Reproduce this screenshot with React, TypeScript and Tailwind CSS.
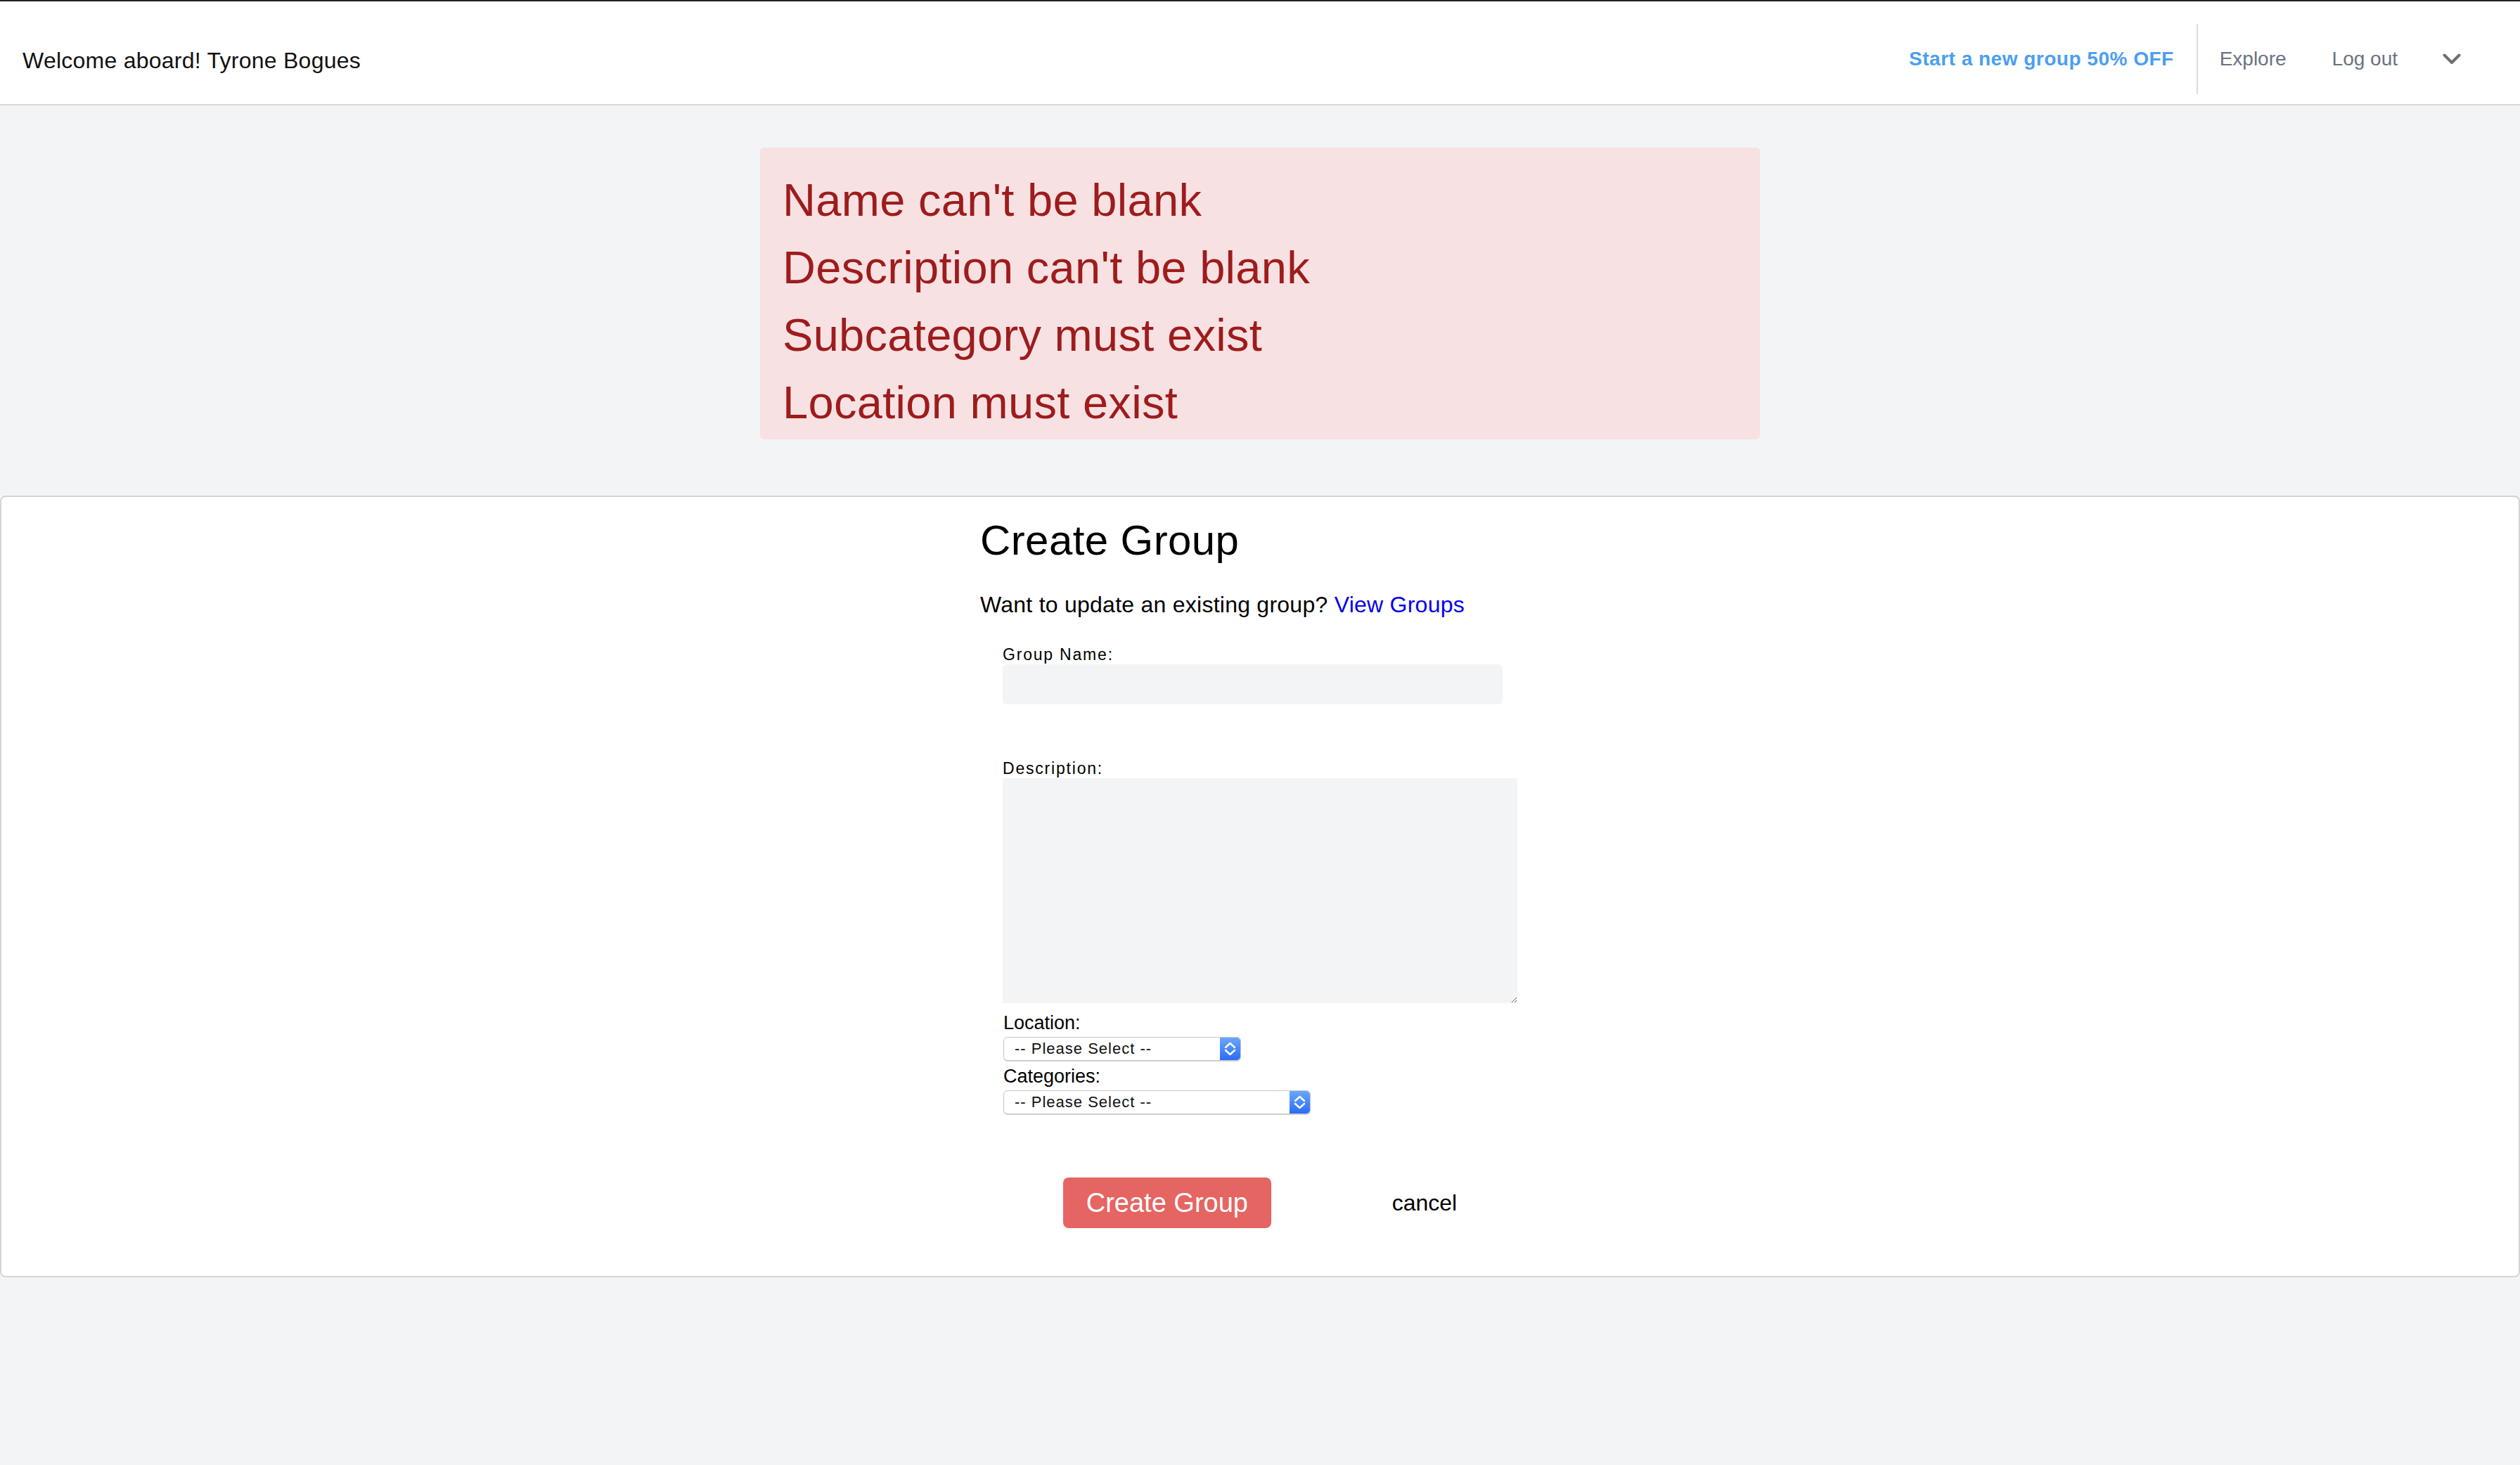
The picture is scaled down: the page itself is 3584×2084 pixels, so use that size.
import React from "react";

function FakeSelect({ wide }: { wide: boolean }) {
  return (
    <div
      className={
        wide
          ? "flex h-[34px] w-[437px] overflow-hidden rounded-[6px] border border-[#c8c8c8] bg-white shadow-[0_1px_1px_rgba(0,0,0,0.18)]"
          : "flex h-[34px] w-[338px] overflow-hidden rounded-[6px] border border-[#c8c8c8] bg-white shadow-[0_1px_1px_rgba(0,0,0,0.18)]"
      }
    >
      <div className="flex flex-1 items-center pl-[15px] text-[22px] leading-none tracking-[1px] text-[#111]">
        -- Please Select --
      </div>
      <div className="flex h-full w-[29px] items-center justify-center bg-linear-to-b from-[#6aa6fb] to-[#2b6cf6]">
        <svg width="29" height="32" viewBox="0 0 29 32">
          <polyline points="8,14 14.5,8 21,14" fill="none" stroke="#fff" strokeWidth="2.4" strokeLinecap="round" strokeLinejoin="round" />
          <polyline points="8,18 14.5,24 21,18" fill="none" stroke="#fff" strokeWidth="2.4" strokeLinecap="round" strokeLinejoin="round" />
        </svg>
      </div>
    </div>
  );
}

export default function App() {
  return (
    <div className="min-h-screen bg-[#f3f4f6] font-['Liberation_Sans',Arial,sans-serif] text-black">
      {/* Header */}
      <header className="flex h-[150px] items-start justify-between border-t-2 border-b-2 border-t-[#222] border-b-[#d9d9d9] bg-white">
        <div className="pl-[32px] pt-[60px] text-[32px] leading-[48px] tracking-[0.25px] text-[#111]">
          Welcome aboard! Tyrone Bogues
        </div>
        <nav className="mt-[32px] flex h-[100px] items-center pr-[84px]">
          <span className="text-[28px] font-bold leading-[40px] tracking-[0.5px] text-[#4b9ef0]">
            Start a new group 50% OFF
          </span>
          <div className="ml-[32px] h-full w-[2px] bg-[#dcdcdc]" />
          <span className="ml-[31px] text-[28px] leading-[40px] text-[#6b7280]">Explore</span>
          <span className="ml-[65px] text-[28px] leading-[40px] text-[#6b7280]">Log out</span>
          <svg className="ml-[64px]" width="26" height="16" viewBox="0 0 26 16">
            <polyline points="2.5,2.5 13,13 23.5,2.5" fill="none" stroke="#6e6e6e" strokeWidth="4" strokeLinecap="round" strokeLinejoin="round" />
          </svg>
        </nav>
      </header>

      {/* Errors */}
      <div className="mx-auto mt-[60px] w-[1422px] rounded-[6px] bg-[#f7e1e3] pl-[32px] pt-[27px] pb-[4px] text-[65px] leading-[96px] tracking-[0.3px] text-[#9e1c1c]">
        <div>Name can't be blank</div>
        <div>Description can't be blank</div>
        <div>Subcategory must exist</div>
        <div>Location must exist</div>
      </div>

      {/* Panel */}
      <section className="mt-[80px] rounded-[8px] border-2 border-[#d4d4d4] bg-white pt-[26px] pb-[68px]">
        <div className="mx-auto w-[796px]">
          <h1 className="text-[60px] leading-[72px] tracking-[0.4px] text-black">Create Group</h1>
          <p className="mt-[31px] text-[32px] leading-[48px] tracking-[0.25px] text-black">
            Want to update an existing group? <span className="text-[#0000ee]">View Groups</span>
          </p>
          <form className="px-[32px]">
            <label className="mt-[33px] block text-[23px] leading-[28px] tracking-[1.8px] text-black">
              Group Name:
            </label>
            <div className="h-[57px] w-[711px] rounded-[6px] bg-[#f3f4f6]" />
            <label className="mt-[77px] block text-[23px] leading-[28px] tracking-[1.8px] text-black">
              Description:
            </label>
            <textarea className="block h-[320px] w-[732px] bg-[#f3f4f6] outline-none" />
            <label className="mt-[13px] block pl-[1px] text-[27px] leading-[30px] text-black">Location:</label>
            <div className="mt-[5px] pl-[1px]">
              <FakeSelect wide={false} />
            </div>
            <label className="mt-[7px] block pl-[1px] text-[27px] leading-[30px] text-black">Categories:</label>
            <div className="mt-[5px] pl-[1px]">
              <FakeSelect wide={true} />
            </div>
            <div className="mt-[90px] flex items-center justify-around">
              <button
                type="button"
                className="h-[72px] w-[296px] rounded-[8px] bg-[#e56562] text-[38px] leading-none text-white"
              >
                Create Group
              </button>
              <span className="text-[32px] leading-[48px] text-black">cancel</span>
            </div>
          </form>
        </div>
      </section>
    </div>
  );
}
